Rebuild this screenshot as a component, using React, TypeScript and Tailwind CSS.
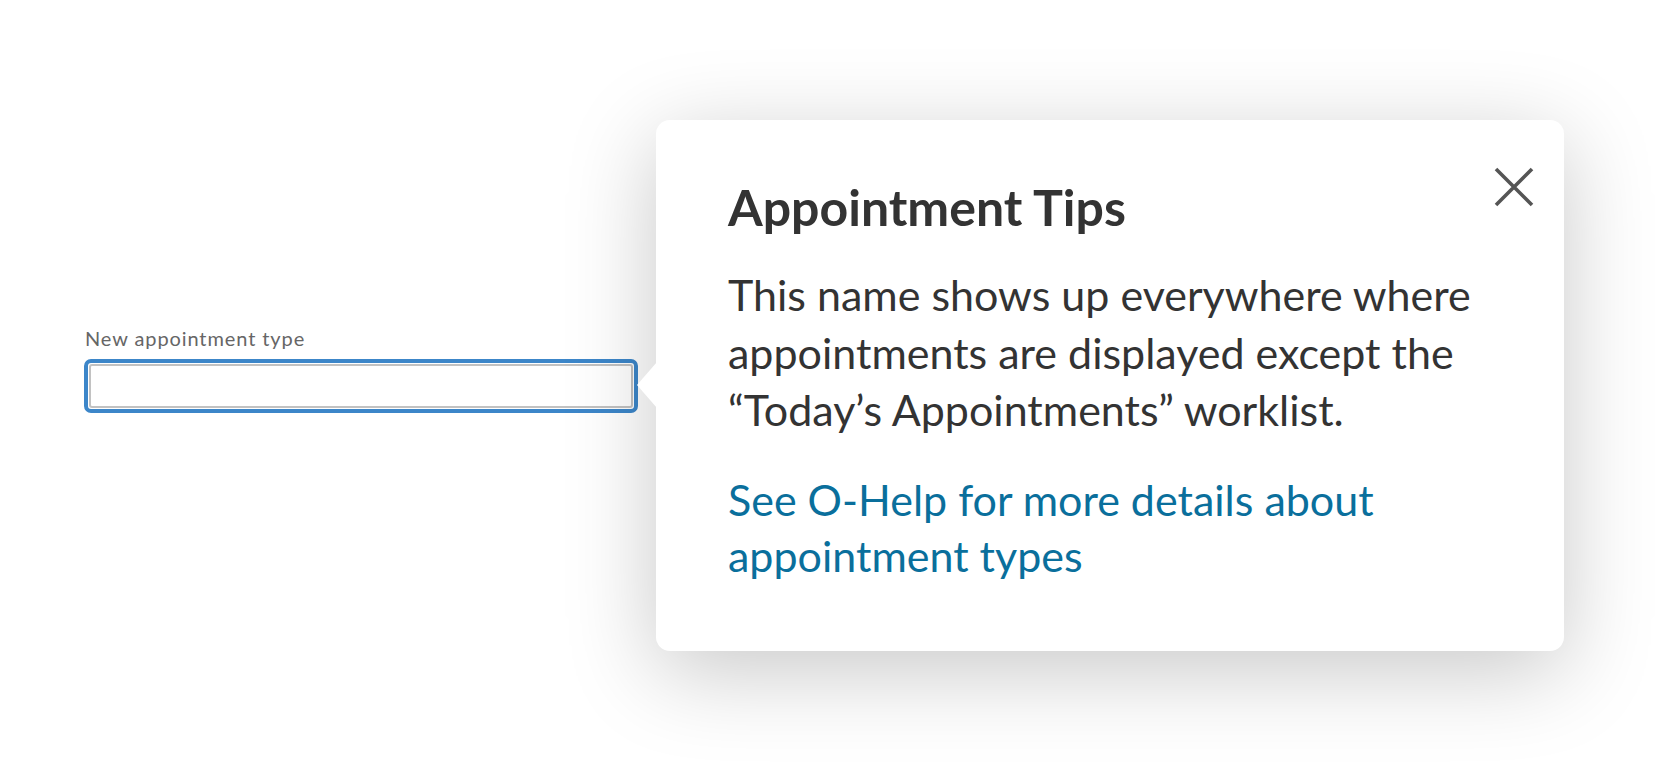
import React from "react";

export default function App() {
  return (
    <div
      className="relative h-[776px] w-full overflow-hidden bg-white"
      style={{ fontFamily: "Lato, 'Open Sans', sans-serif" }}
    >
      <div className="flex items-start pl-[85px] pt-[120px]">
        {/* Left: label + input */}
        <div className="mt-[206px] flex w-[553px] flex-col">
          <label className="mb-[9px] text-[20px] leading-[24px] tracking-[0.9px] text-[#666666]">
            New appointment type
          </label>
          <div className="ml-[-1px] h-[54px] w-[554px] rounded-[7px] border-[4px] border-[#3c86c9] p-[1px]">
            <input
              type="text"
              className="h-full w-full rounded-[3px] border-2 border-[#c2c2c2] bg-white outline-none"
            />
          </div>
        </div>

        {/* Popover */}
        <div className="relative ml-[18px] h-[531px] w-[908px] rounded-[14px] bg-white pl-[72px] pt-[59px] shadow-[0_20px_90px_rgba(0,0,0,0.22)]">
          {/* arrow */}
          <svg
            className="absolute left-[-20px] top-[242px]"
            width="21"
            height="46"
            viewBox="0 0 21 46"
          >
            <polygon points="21,0 1,23 21,46" fill="#ffffff" />
          </svg>

          {/* close */}
          <button className="absolute right-[30px] top-[47px] h-[40px] w-[40px]" aria-label="Close">
            <svg width="40" height="40" viewBox="0 0 40 40">
              <path
                d="M2 2 L38 38 M38 2 L2 38"
                stroke="#555555"
                strokeWidth="3.6"
                fill="none"
              />
            </svg>
          </button>

          <h2 className="text-[50px] font-bold leading-[56px] text-[#333333]">
            Appointment Tips
          </h2>
          <p className="mt-[31px] w-[800px] text-[43px] leading-[57.5px] text-[#333333]">
            This name shows up everywhere where
            <br />
            appointments are displayed except the
            <br />
            “Today’s Appointments” worklist.
          </p>
          <a
            href="#"
            className="mt-[33px] block w-[800px] text-[43px] leading-[56px] text-[#0a6f9c]"
          >
            See O-Help for more details about
            <br />
            appointment types
          </a>
        </div>
      </div>
    </div>
  );
}
